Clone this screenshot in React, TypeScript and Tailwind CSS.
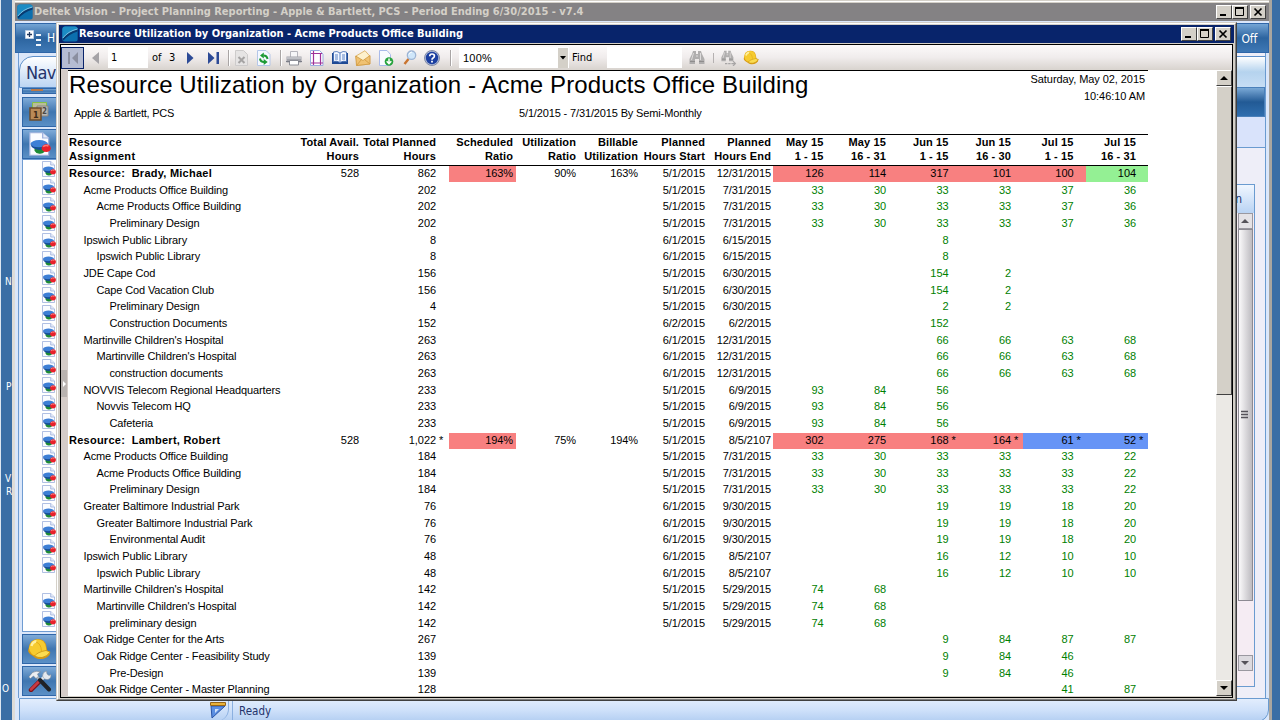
import React from "react";

type Tone = "r" | "g" | "b";
type Row = {
  name: string;
  level: number;
  avail?: string;
  planned: string;
  ratios?: string[];
  start: string;
  end: string;
  months: string[];
  tones?: Tone[];
};

const r = (level: number, name: string, planned: string, start: string, end: string, months: string): Row => ({
  level,
  name,
  planned,
  start,
  end,
  months: months.split(","),
});

const rows: Row[] = [
  {
    name: "Resource:  Brady, Michael", level: 0, avail: "528", planned: "862", ratios: ["163%", "90%", "163%"],
    start: "5/1/2015", end: "12/31/2015", months: ["126", "114", "317", "101", "100", "104"],
    tones: ["r", "r", "r", "r", "r", "g"],
  },
  r(1, "Acme Products Office Building", "202", "5/1/2015", "7/31/2015", "33,30,33,33,37,36"),
  r(2, "Acme Products Office Building", "202", "5/1/2015", "7/31/2015", "33,30,33,33,37,36"),
  r(3, "Preliminary Design", "202", "5/1/2015", "7/31/2015", "33,30,33,33,37,36"),
  r(1, "Ipswich Public Library", "8", "6/1/2015", "6/15/2015", ",,8,,,"),
  r(2, "Ipswich Public Library", "8", "6/1/2015", "6/15/2015", ",,8,,,"),
  r(1, "JDE Cape Cod", "156", "5/1/2015", "6/30/2015", ",,154,2,,"),
  r(2, "Cape Cod Vacation Club", "156", "5/1/2015", "6/30/2015", ",,154,2,,"),
  r(3, "Preliminary Design", "4", "5/1/2015", "6/30/2015", ",,2,2,,"),
  r(3, "Construction Documents", "152", "6/2/2015", "6/2/2015", ",,152,,,"),
  r(1, "Martinville Children's Hospital", "263", "6/1/2015", "12/31/2015", ",,66,66,63,68"),
  r(2, "Martinville Children's Hospital", "263", "6/1/2015", "12/31/2015", ",,66,66,63,68"),
  r(3, "construction documents", "263", "6/1/2015", "12/31/2015", ",,66,66,63,68"),
  r(1, "NOVVIS Telecom Regional Headquarters", "233", "5/1/2015", "6/9/2015", "93,84,56,,,"),
  r(2, "Novvis Telecom HQ", "233", "5/1/2015", "6/9/2015", "93,84,56,,,"),
  r(3, "Cafeteria", "233", "5/1/2015", "6/9/2015", "93,84,56,,,"),
  {
    name: "Resource:  Lambert, Robert", level: 0, avail: "528", planned: "1,022 *", ratios: ["194%", "75%", "194%"],
    start: "5/1/2015", end: "8/5/2107", months: ["302", "275", "168 *", "164 *", "61 *", "52 *"],
    tones: ["r", "r", "r", "r", "b", "b"],
  },
  r(1, "Acme Products Office Building", "184", "5/1/2015", "7/31/2015", "33,30,33,33,33,22"),
  r(2, "Acme Products Office Building", "184", "5/1/2015", "7/31/2015", "33,30,33,33,33,22"),
  r(3, "Preliminary Design", "184", "5/1/2015", "7/31/2015", "33,30,33,33,33,22"),
  r(1, "Greater Baltimore Industrial Park", "76", "6/1/2015", "9/30/2015", ",,19,19,18,20"),
  r(2, "Greater Baltimore Industrial Park", "76", "6/1/2015", "9/30/2015", ",,19,19,18,20"),
  r(3, "Environmental Audit", "76", "6/1/2015", "9/30/2015", ",,19,19,18,20"),
  r(1, "Ipswich Public Library", "48", "6/1/2015", "8/5/2107", ",,16,12,10,10"),
  r(2, "Ipswich Public Library", "48", "6/1/2015", "8/5/2107", ",,16,12,10,10"),
  r(1, "Martinville Children's Hospital", "142", "5/1/2015", "5/29/2015", "74,68,,,,"),
  r(2, "Martinville Children's Hospital", "142", "5/1/2015", "5/29/2015", "74,68,,,,"),
  r(3, "preliminary design", "142", "5/1/2015", "5/29/2015", "74,68,,,,"),
  r(1, "Oak Ridge Center for the Arts", "267", "", "", ",,9,84,87,87"),
  r(2, "Oak Ridge Center - Feasibility Study", "139", "", "", ",,9,84,46,"),
  r(3, "Pre-Design", "139", "", "", ",,9,84,46,"),
  r(2, "Oak Ridge Center - Master Planning", "128", "", "", ",,,,41,87"),
];

const COLS =
  "grid w-[1080px] shrink-0 grid-cols-[232px_59px_77px_13px_67px_60px_62px_67px_68px_62.5px_62.5px_62.5px_62.5px_62.5px_62.5px] whitespace-pre";
const INDENT = ["pl-px", "pl-[15.5px]", "pl-[28.5px]", "pl-[41.5px]"];
const TONE = { r: "bg-[#f88080] text-black", g: "bg-[#94f094] text-black", b: "bg-[#6694f6] text-black" };
const HEAD: [string, string][] = [
  ["Total Avail.", "Hours"], ["Total Planned", "Hours"], ["", ""], ["Scheduled", "Ratio"], ["Utilization", "Ratio"],
  ["Billable", "Utilization"], ["Planned", "Hours Start"], ["Planned", "Hours End"], ["May 15", "1 - 15"],
  ["May 15", "16 - 31"], ["Jun 15", "1 - 15"], ["Jun 15", "16 - 30"], ["Jul 15", "1 - 15"], ["Jul 15", "16 - 31"],
];
const HEAD_PAD = [
  "", "", "", "pr-[3px]", "", "", "", "pr-[2px]", "pr-[12px]", "pr-[12px]", "pr-[12px]", "pr-[12px]", "pr-[12px]", "pr-[12px]",
];

function ReportRow({ row }: { row: Row }) {
  const [planned, plannedStar] = row.planned.split(" ");
  const ratios = row.ratios ?? ["", "", ""];
  return (
    <div className={`${COLS} h-[16.67px] text-right leading-[15px]`}>
      <div className={`text-left ${INDENT[row.level]} ${row.level === 0 ? "font-bold tracking-[0.25px]" : "tracking-[-0.13px]"}`}>{row.name}</div>
      <div>{row.avail}</div>
      <div>{planned}</div>
      <div className="pl-[3px] text-left">{plannedStar}</div>
      <div className={`h-4 pr-[3px] ${row.ratios ? "bg-[#f88080]" : ""}`}>{ratios[0]}</div>
      <div>{ratios[1]}</div>
      <div>{ratios[2]}</div>
      <div>{row.start}</div>
      <div className="pr-[2px]">{row.end}</div>
      {row.months.map((m, i) => {
        const [value, star] = m.split(" ");
        return (
          <div key={i} className={`flex h-4 justify-end ${row.tones ? TONE[row.tones[i]] : "text-[#008000]"}`}>
            <span>{value}</span>
            <span className="w-[12px] pl-[3px] text-left">{star}</span>
          </div>
        );
      })}
    </div>
  );
}

function Logo() {
  return (
    <svg className="h-4 w-4 shrink-0" viewBox="0 0 16 16">
      <rect x="0.3" y="0.5" width="15.4" height="15" rx="2.5" fill="#0c6fae" />
      <path d="M.4 12.500V3Q.5.7 3 .6h10q2.400.1 2.600 2.400Q6 5.500.4 12.500z" fill="#1b8cc4" />
      <path d="M.5 12.500Q6 5.500 15.600 3v2.500Q7 8 1.500 14.500z" fill="#083a70" />
      <path d="M.7 12.200Q6 5.300 15.500 3" stroke="#8fd3ee" strokeWidth=".9" fill="none" />
    </svg>
  );
}

function CaptionButtons() {
  const b =
    "flex h-[14px] w-4 items-center justify-center border border-t-white border-l-white border-r-[#404040] border-b-[#404040] bg-[#d4d0c8]";
  return (
    <div className="flex">
      <div className={b}>
        <svg width="10" height="10"><path d="M1 8h6" stroke="#000" strokeWidth="2" /></svg>
      </div>
      <div className={b}>
        <svg width="10" height="10"><path d="M.5 1v7.500h8V1" stroke="#000" fill="none" /><path d="M0 1h9" stroke="#000" strokeWidth="2" /></svg>
      </div>
      <div className={`${b} ml-[2px]`}>
        <svg width="10" height="10"><path d="M1.500 1.500l7 7M8.500 1.500l-7 7" stroke="#000" strokeWidth="1.700" /></svg>
      </div>
    </div>
  );
}

function PieDoc({ className }: { className: string }) {
  return (
    <svg className={className} viewBox="0 0 14 16" preserveAspectRatio="none">
      <path d="M.5.5h8.200L12.500 4v11.500H.5z" fill="#fbfcff" stroke="#9db0dc" strokeWidth=".8" />
      <path d="M8.700.5V4h3.800" fill="#e6ecf8" stroke="#9db0dc" strokeWidth=".8" />
      <path d="M3.500 10h6l.5 3.200q-1.500 1.600-3.500 1.300-2.200-.2-3-2z" fill="#1d8a36" />
      <ellipse cx="6.500" cy="7.900" rx="5.500" ry="2.500" fill="#3d7fd6" />
      <path d="M1 8q.5 3.800 6.500 4l2-2.500 2-1Q9 10.400 6 10.300 2 10 1 8z" fill="#174c9d" />
      <ellipse cx="11" cy="10.800" rx="2.900" ry="2.600" fill="#e8202a" />
      <path d="M9 9.800q1.500-1.200 3.400-.5" stroke="#ff7a72" fill="none" />
    </svg>
  );
}

function Helmet({ className }: { className: string }) {
  return (
    <svg className={className} viewBox="0 0 24 22">
      <path d="M2 9Q3 1.500 10.500 1q8-.2 9 8l.7 3.500 3 1.500q.3 3-3.700 5.500-4 2.200-9 1.200-2.500-.7-4.500-2.700Q.5 15 1.200 12z" fill="#d99a10" />
      <path d="M2 10Q3 1.800 10.500 1.400q7.500 0 8.500 8l.3 3Q15 15 10 18 3 17 2 10z" fill="#f6cb30" />
      <path d="M4.500 8q1-4.200 5-4.700" stroke="#fff0a0" strokeWidth="2.400" fill="none" />
      <path d="M9 4q5 1.500 5.500 9" stroke="#e3ae1b" strokeWidth="1" fill="none" />
      <path d="M7.500 18q3-4 11.500-5.500l4 1.500q-2.500 4.500-8 5.500-4 .5-7.500-1.500z" fill="#fbdc50" stroke="#c08a10" strokeWidth=".7" />
    </svg>
  );
}

function Tools() {
  return (
    <svg className="h-[22px] w-6" viewBox="0 0 24 22">
      <path d="M13 10l5-5" stroke="#e4e8ee" strokeWidth="3" />
      <path d="M14.500 6q0-4 4-5l.5 3 2 1.500 2-1q.5 4-3 5-4 .5-5.500-3.500z" fill="#e4e8ee" stroke="#7b8591" strokeWidth=".5" />
      <path d="M12 11L3 20" stroke="#7d1218" strokeWidth="4.500" strokeLinecap="round" />
      <path d="M11.500 11L3 19.500" stroke="#c93a42" strokeWidth="2.500" strokeLinecap="round" />
      <path d="M8 6l4 4" stroke="#aeb6bf" strokeWidth="2.500" />
      <path d="M12 10l9 9.500" stroke="#1f2227" strokeWidth="4" strokeLinecap="round" />
      <path d="M.7 7l3.800-4.500Q8 .5 12.500 1.800L9.500 4l1 2.200L8 8.500 5.500 6 2.500 8.500z" fill="#eceff2" stroke="#6b7480" strokeWidth=".5" />
    </svg>
  );
}

function Binoculars() {
  return (
    <g>
      <path d="M4 1h3v3h2V1h3l1 3 2.500 5v5h-5.500V9h-4v5H.5V9L3 4z" fill="#b0aeae" />
      <path d="M4.500 3L2.500 10M11.500 3v7M7 6h2" stroke="#dedcdc" />
      <path d="M1 11.500h5M10 11.500h5" stroke="#8f8d8d" />
    </g>
  );
}

function Sep() {
  return <div className="h-4 w-[2px] border-r border-white bg-[#a9a5a5]" />;
}

function Slot({ w, children }: { w: string; children: React.ReactNode }) {
  return <div className={`flex h-full shrink-0 items-center justify-center ${w}`}>{children}</div>;
}

function Toolbar() {
  return (
    <div className="flex h-[25px] w-[1171px] shrink-0 items-center bg-gradient-to-b from-[#fcfafa] via-[#f0ecec] to-[#d8d3ce] text-[11px]">
      <div className="flex h-[22px] w-[23px] shrink-0 items-center justify-center border border-[#0a246a] bg-[#b5bcd2]">
        <svg width="14" height="14"><path d="M2 1h2v12H2zM12 1v12L6 7z" fill="#8b8fa0" /></svg>
      </div>
      <Slot w="w-6"><svg width="8" height="14"><path d="M7 1v12L0 7z" fill="#a5a3a7" /></svg></Slot>
      <div className="flex h-[21px] w-10 shrink-0 items-center bg-white pt-px pl-[3px]">1</div>
      <div className="w-[21px] shrink-0 pt-px pl-1">of</div>
      <div className="w-[10px] shrink-0 pt-px">3</div>
      <Slot w="w-[22px]"><svg width="8" height="14"><path d="M1 1v12l6.500-6z" fill="#2c4a96" /></svg></Slot>
      <Slot w="w-6"><svg width="13" height="14"><path d="M1 1v12l6.500-6zM9.500 1H12v12H9.500z" fill="#2c4a96" /></svg></Slot>
      <Slot w="w-2"><Sep /></Slot>
      <Slot w="w-4">
        <svg width="13" height="16"><path d="M.5.5h8l4 4v11H.5z" fill="#e6e4e4" stroke="#cdcbcb" /><path d="M3.500 7l6 6M9.500 7l-6 6" stroke="#a5a3a3" strokeWidth="2" /></svg>
      </Slot>
      <Slot w="w-[30px]">
        <svg width="14" height="16">
          <path d="M.5.5h8.500l4 4v11H.5z" fill="#f4f8ff" stroke="#b4c6e8" />
          <path d="M10.500 9Q10 5.500 6.500 5.500M3 8.500Q3.500 12 7 12" stroke="#1c9a35" strokeWidth="2" fill="none" />
          <path d="M6.800 2.500v6L3 5.500zM6.700 9v6l4-3z" fill="#1c9a35" />
        </svg>
      </Slot>
      <Slot w="w-1"><Sep /></Slot>
      <Slot w="w-[21px]">
        <svg width="16" height="16">
          <path d="M4.500 1.500h7v6h-7z" fill="#f6f6f8" stroke="#b5b5bc" />
          <path d="M.5 6.500h15v6H.5z" fill="#a2a3aa" /><path d="M1 8h14" stroke="#dcdde1" />
          <path d="M3.500 10.500h9v4.500h-9z" fill="#fff" stroke="#8d8f97" /><path d="M0 11.500h4M12 11.500h4" stroke="#7b7d86" />
        </svg>
      </Slot>
      <Slot w="w-[25px]">
        <svg width="14" height="16"><path d="M.5.5h9l3.500 3.500v11.500H.5z" fill="#fff" stroke="#9aaee0" /><path d="M3.500 1v14M10.500 4v11M1 3.500h11M1 13h12" stroke="#a03298" strokeWidth="1.200" /></svg>
      </Slot>
      <Slot w="w-[21px]">
        <svg width="16" height="14"><path d="M0 2h16v11H0z" fill="#1f4a94" /><path d="M1.500 1Q5-.5 8 2q3-2.500 6.500-1v9.500Q11 9.500 8 11.500 5 9.500 1.500 10.500z" fill="#f3f7ff" stroke="#3e68b0" strokeWidth=".8" /><path d="M8 2v10M3 4h3M3 6h3M3 8h3M10 4h3M10 6h3M10 8h3" stroke="#5b82c4" /></svg>
      </Slot>
      <Slot w="w-[25px]">
        <svg width="16" height="16"><path d="M1 6L10 .7l4.700 5.300v8L2 15.500z" fill="#fdf1cd" stroke="#d9aa55" strokeWidth=".8" /><path d="M.7 6L8 10.500 15 5.500v8.500L1.500 15.500z" fill="#f0c272" stroke="#cf983f" strokeWidth=".8" /><path d="M1.500 15.500L6.500 9.500M15 14L9.500 9.500" stroke="#cf983f" strokeWidth=".8" /></svg>
      </Slot>
      <Slot w="w-[22px]">
        <svg width="15" height="16"><path d="M.5.5h7.500l3.500 4v11H.5z" fill="#f9fbff" stroke="#a9baea" /><circle cx="10" cy="11.500" r="4.300" fill="#27a33d" /><path d="M10 8.500v4.500M7.700 11.300L10 13.700l2.300-2.400" stroke="#fff" strokeWidth="1.500" fill="none" /></svg>
      </Slot>
      <Slot w="w-[25px]">
        <svg width="14" height="16"><path d="M5.500 9L1.500 14" stroke="#c9742f" strokeWidth="2.400" /><circle cx="8.500" cy="5.200" r="4.200" fill="#cfe6fa" stroke="#9db4d4" strokeWidth="1.300" /><path d="M6 4.500q1-2.500 3-2.500" stroke="#fff" fill="none" /></svg>
      </Slot>
      <Slot w="w-5">
        <svg width="16" height="16"><circle cx="8" cy="8" r="7.500" fill="#b3bdd8" stroke="#6f7a98" strokeWidth=".8" /><circle cx="8" cy="8" r="6.200" fill="#1c3fa0" /><path d="M5.700 6.300Q5.800 4 8 4q2.400 0 2.400 2 0 1.200-1.300 1.900Q8 8.500 8 9.700" stroke="#fff" strokeWidth="1.700" fill="none" /><path d="M8 10.800v1.800" stroke="#fff" strokeWidth="1.800" /></svg>
      </Slot>
      <Slot w="w-[17px]"><Sep /></Slot>
      <div className="flex h-[21px] w-[110px] shrink-0 items-center justify-between bg-white pl-1 pr-px">
        <span className="pt-[2px] font-['Liberation_Sans',Arial,sans-serif] text-[11px] tracking-[0.2px]">100%</span>
        <div className="flex h-[20px] w-[10px] items-center justify-center bg-[#d4d0c8]">
          <svg width="6" height="4"><path d="M0 0h6L3 3.500z" /></svg>
        </div>
      </div>
      <div className="w-[38px] shrink-0 pt-px pl-[3px]">Find</div>
      <div className="h-[21px] w-[75px] shrink-0 bg-white" />
      <Slot w="w-[30px]"><svg width="16" height="15"><Binoculars /></svg></Slot>
      <Slot w="w-[3px]"><div className="h-2.5 w-px bg-[#b5b1b1]" /></Slot>
      <Slot w="w-7"><svg width="16" height="16" viewBox="0 0 20 20"><Binoculars /><path d="M5 17h3m1 0h3m1 0h5m-3-3l3 3-3 3" stroke="#a7a5a5" strokeWidth="1.500" fill="none" /></svg></Slot>
      <Slot w="w-4"><Helmet className="h-[15px] w-4" /></Slot>
    </div>
  );
}

function ScrollArrow({ up }: { up?: boolean }) {
  return (
    <div className="flex h-4 w-4 shrink-0 items-center justify-center border border-t-white border-l-white border-r-[#404040] border-b-[#404040] bg-[#d4d0c8]">
      <svg width="8" height="4"><path d={up ? "M0 4h8L4 0z" : "M0 0h8L4 4z"} /></svg>
    </div>
  );
}

function Report() {
  return (
    <div className="flex h-[626px] w-[1148px] flex-col overflow-hidden bg-white font-['Liberation_Sans',Arial,sans-serif] text-[11px] tracking-[-0.07px] text-black">
      <div className="flex h-[35px] w-[1080px] shrink-0 justify-between border-t border-black whitespace-nowrap">
        <div className="pl-px text-[24px] leading-[28px] tracking-[0.11px]">Resource Utilization by Organization - Acme Products Office Building</div>
        <div className="pr-[3px] text-right leading-[17px]">
          <div>Saturday, May 02, 2015</div>
          <div>10:46:10 AM</div>
        </div>
      </div>
      <div className="flex h-[29px] shrink-0 leading-[17px] tracking-[-0.14px]">
        <div className="w-[451px] pl-[6px] tracking-[-0.24px]">Apple &amp; Bartlett, PCS</div>
        <div>5/1/2015 - 7/31/2015 By Semi-Monthly</div>
      </div>
      <div className={`${COLS} h-8 border-y border-black text-right leading-[14px] font-bold tracking-[0.12px]`}>
        <div className="pl-px text-left tracking-[0.35px]">
          <div>Resource</div>
          <div>Assignment</div>
        </div>
        {HEAD.map(([a, b], i) => (
          <div key={i} className={HEAD_PAD[i]}>
            <div>{a}</div>
            <div>{b}</div>
          </div>
        ))}
      </div>
      {rows.map((row, i) => (
        <ReportRow key={i} row={row} />
      ))}
    </div>
  );
}

function Popup() {
  return (
    <div className="absolute top-[22px] left-[56px] flex h-[679px] w-[1181px] flex-col border border-t-[#d4d0c8] border-l-[#d4d0c8] border-r-[#404040] border-b-[#404040] bg-[#d4d0c8]">
      <div className="flex flex-1 flex-col border border-t-white border-l-white border-r-[#808080] border-b-[#808080] p-px">
        <div className="flex h-[18px] w-full shrink-0 items-center bg-[#08246b] pl-[3px] pr-[3px]">
          <Logo />
          <div className="flex-1 pl-px text-[11px] font-bold whitespace-nowrap text-white">
            Resource Utilization by Organization - Acme Products Office Building
          </div>
          <CaptionButtons />
        </div>
        <div className="mt-px ml-px flex w-[1173px] flex-1 flex-col border border-black">
          <Toolbar />
          <div className="flex h-[626px]">
            <div className="flex w-[7px] shrink-0 items-start bg-[#d5ccc8] pt-[300px]">
              <div className="flex h-[27px] w-[6px] items-center bg-[#b9b3b0]">
                <svg width="6" height="8"><path d="M2 1v6l3-3z" fill="#fff" /></svg>
              </div>
            </div>
            <Report />
            <div className="flex w-4 shrink-0 flex-col bg-[#ebe9e5]">
              <ScrollArrow up />
              <div className="h-[309px] border border-t-white border-l-white border-r-[#404040] border-b-[#404040] bg-[#d4d0c8]" />
              <div className="flex-1" />
              <ScrollArrow />
            </div>
          </div>
        </div>
      </div>
    </div>
  );
}

const BLUE = "border border-[#2f66a8] bg-gradient-to-b from-[#7fabd8] via-[#3f76b0] to-[#5b90c6]";

function Sidebar() {
  return (
    <div className="flex w-[60px] shrink-0 flex-col border-l border-[#6f9cd2] bg-[#dbe7fa] pt-[3px]">
      <div className="h-8 shrink-0 overflow-hidden rounded-tl-[14px] border border-[#5c8fca] bg-gradient-to-b from-white to-[#bcd5f3] pl-[6px] text-[18px] leading-[31px] tracking-[-0.6px] text-[#24336b]">
        Nav
      </div>
      <div className="ml-[3px] flex flex-1 flex-col">
        <div className={`h-[6px] shrink-0 pl-2 ${BLUE}`}><div className="h-[2px] w-3 bg-[#b97a4a]" /></div>
        <div className={`mt-[3px] h-[30px] shrink-0 pt-[3px] pl-[6px] ${BLUE}`}>
          <svg width="21" height="21">
            <path d="M3.500 1.500h14v12h-14z" fill="#b8bd9a" stroke="#86c044" />
            <path d="M8 5h11v10H8z" fill="#b9b8b4" stroke="#8a8680" />
            <path d="M1 7h11v12H1z" fill="#b98a57" stroke="#6b4c2c" strokeWidth="1.500" />
            <text x="4" y="16.500" fontSize="9" fontWeight="bold" fill="#3d2a18">1</text>
            <text x="13" y="13" fontSize="8" fontWeight="bold" fill="#4c4a48">2</text>
          </svg>
        </div>
        <div className={`mt-[2px] h-[30px] shrink-0 pt-[2px] pl-[6px] ${BLUE}`}><PieDoc className="h-6 w-[22px]" /></div>
        <div className="flex h-[473px] shrink-0 flex-col gap-[2px] border border-[#6f9cd2] bg-white pt-px pl-[19px]">
          {Array.from({ length: 26 }, (_, i) =>
            i === 23 ? <div key={i} className="h-4" /> : <PieDoc key={i} className="h-4 w-[14px]" />,
          )}
        </div>
        <div className={`mt-[2px] h-[30px] shrink-0 pt-[3px] pl-1 ${BLUE}`}><Helmet className="h-[22px] w-6" /></div>
        <div className={`mt-[2px] h-[30px] shrink-0 pt-[3px] pl-[5px] ${BLUE}`}><Tools /></div>
      </div>
    </div>
  );
}

function RightPane() {
  return (
    <div className="flex w-[60px] shrink-0 flex-col border-r border-[#6a9bd0] bg-[#eeeef8]">
      <div className="mt-[3px] h-[31px] shrink-0 border-t border-[#5c8fca] bg-gradient-to-b from-white via-[#b5d3ee] to-[#c7def5]" />
      <div className="h-[30px] shrink-0 border border-[#4a80ba] bg-gradient-to-b from-[#7aa9d6] via-[#225a95] to-[#2f6eae]" />
      <div className="h-[31px] shrink-0 border-b border-[#6a9bd0] bg-[#d9e3fb]" />
      <div className="mt-9 mr-[10px] flex h-[503px] shrink-0 flex-col border border-[#6a9bd0]">
        <div className="flex h-[28px] shrink-0 items-center justify-end bg-gradient-to-b from-[#f0f6ff] to-[#b9d3f3] pr-3 text-[12px] text-[#24336b]">n</div>
        <div className="ml-auto flex w-[17px] flex-1 flex-col items-center bg-[#f5ecf3] pr-px">
          <div className="flex h-4 w-[15px] items-center justify-center border border-[#9a98a0] bg-[#e4e2e6]"><svg width="8" height="4"><path d="M0 4h8L4 0z" fill="#55535a" /></svg></div>
          <div className="flex h-[372px] w-[15px] shrink-0 items-center justify-center border border-[#8c8a92] bg-gradient-to-r from-[#fbfafb] to-[#bdbbc0]">
            <svg width="8" height="10"><path d="M0 1.500h7M0 4.500h7M0 7.500h7" stroke="#55535a" strokeWidth="1.500" /></svg>
          </div>
          <div className="mt-[54px] flex h-4 w-[15px] items-center justify-center border border-[#9a98a0] bg-[#dcdadf]"><svg width="8" height="4"><path d="M0 0h8L4 4z" fill="#55535a" /></svg></div>
        </div>
      </div>
    </div>
  );
}

function BackWindow() {
  return (
    <div className="flex h-[724px] w-[1260px] shrink-0 flex-col border-x-[3px] border-l-[#dedcd8] border-r-[#aaa69f] bg-[#dbe7fa]">
      <div className="h-[3px] shrink-0 border-y border-[#d4d0c8] bg-white" />
      <div className="flex h-[18px] shrink-0 items-center bg-[#848284] pl-[2px] pr-[3px]">
        <Logo />
        <div className="flex-1 pl-px text-[11px] font-bold whitespace-nowrap text-[#d4d0c8]">
          Deltek Vision - Project Planning Reporting - Apple &amp; Bartlett, PCS - Period Ending 6/30/2015 - v7.4
        </div>
        <CaptionButtons />
      </div>
      <div className="mt-[2px] flex h-[30px] shrink-0 items-center justify-between border border-[#2f66a8] bg-gradient-to-b from-[#74a5d5] via-[#2c649f] to-[#3e78b5] pr-[11px] pl-[9px] text-white">
        <div className="flex items-center gap-[5px]">
          <svg width="17" height="17"><path d="M.5.5h8v8h-8z" fill="#fff" stroke="#b9cce4" /><path d="M2 4.500h5M4.500 2v5" stroke="#23395f" strokeWidth="1.300" /><path d="M11 4h5v2h-5zM11 9h5v2h-5zM11 14h5v2h-5z" fill="#f0f5fb" /></svg>
          <span className="text-[12px]">H</span>
        </div>
        <span className="pt-px text-[12px] tracking-[-0.2px]">Off</span>
      </div>
      <div className="flex h-[645px] shrink-0 justify-between pr-[3px] pl-[3px]">
        <Sidebar />
        <RightPane />
      </div>
      <div className="ml-1 flex h-6 shrink-0 rounded-br-[12px] border border-[#6a9bd0] bg-gradient-to-b from-[#e2edfd] via-[#cfe1fa] to-[#b4cff2] text-[11.5px] text-[#24336b]">
        <div className="flex w-[209px] justify-end rounded-br-[12px] border-r border-[#8bb0e0] pt-[3px] pr-[1px]">
          <svg width="17" height="17"><path d="M1 4h14L2 16z" fill="#5b8fe2" stroke="#2a54a6" /><path d="M5 7h4l-4 4z" fill="#cfe1fa" /><path d="M.5.5h15v3H.5z" fill="#e8b23a" stroke="#96651a" /></svg>
        </div>
        <div className="ml-[3px] flex-1 border-l border-[#8bb0e0] pt-[3px] pl-[6px] leading-[18px]">Ready</div>
      </div>
    </div>
  );
}

export default function App() {
  return (
    <div className="relative flex h-[720px] w-[1280px] overflow-hidden bg-[#3a6ea5] font-['DejaVu_Sans_Condensed','DejaVu_Sans',sans-serif] text-black">
      <div className="flex w-3 shrink-0 flex-col items-end overflow-hidden border-l border-[#dde6f0] pt-[275px] text-[10px] leading-[14px] text-white">
        <div className="h-[105px] w-[7px] shrink-0">N</div>
        <div className="h-[92px] w-[6px] shrink-0">P</div>
        <div className="h-[13px] w-[7px] shrink-0">V</div>
        <div className="h-[197px] w-[6px] shrink-0">R</div>
        <div className="w-[10px] shrink-0">O</div>
      </div>
      <BackWindow />
      <Popup />
    </div>
  );
}
